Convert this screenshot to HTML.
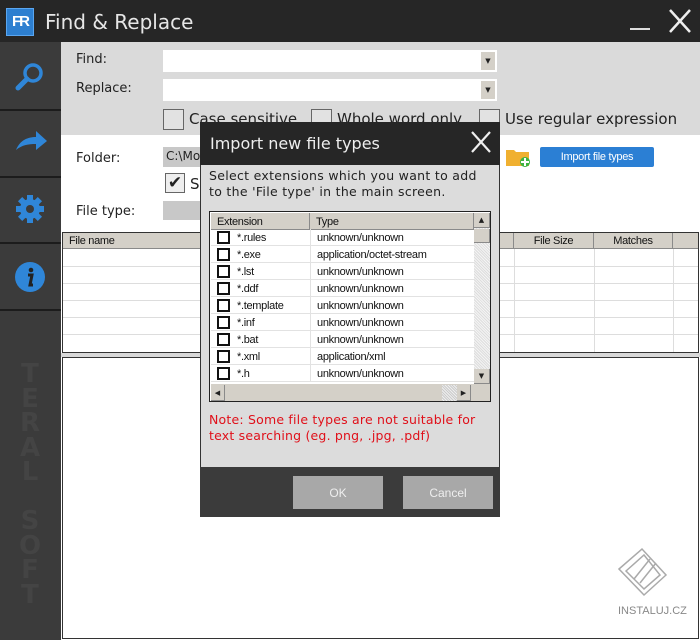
<!DOCTYPE html>
<html><head><meta charset="utf-8"><style>
*{margin:0;padding:0;box-sizing:border-box}
body{width:700px;height:640px;position:relative;overflow:hidden;background:#fff;font-family:"DejaVu Sans","Liberation Sans",sans-serif;font-size:13px;color:#222}
.a{position:absolute}
.n{font-family:"Liberation Sans",sans-serif;font-size:11px;letter-spacing:-0.3px;color:#111}
.cb{position:absolute;width:11px;height:11px;border:2px solid #111;background:#fff}
.hd{background:#d4d0c8;border-right:1px solid #8a8a8a;border-bottom:1px solid #8a8a8a}
</style></head><body>
<div class="a" style="left:0;top:0;width:700px;height:42px;background:#262626"></div>
<div class="a" style="left:6px;top:8px;width:28px;height:28px;background:#2d7fd0;border:1px solid #5aa6f0;color:#fff;font-family:'Liberation Sans';font-size:15px;font-weight:bold;text-align:center;line-height:26px;letter-spacing:-2px">FR</div>
<div class="a" style="left:45px;top:10px;color:#e6e6e6;font-size:20px">Find &amp; Replace</div>
<div class="a" style="left:630px;top:28px;width:20px;height:2px;background:#ddd"></div>
<svg class="a" style="left:668px;top:8px" width="24" height="26"><path d="M2 2L22 24M22 2L2 24" stroke="#eee" stroke-width="2.5"/></svg>
<div class="a" style="left:0;top:42px;width:61px;height:598px;background:#3b3b3b"></div>
<div class="a" style="left:0;top:109px;width:61px;height:2px;background:#1c1c1c"></div>
<div class="a" style="left:0;top:176px;width:61px;height:2px;background:#1c1c1c"></div>
<div class="a" style="left:0;top:242px;width:61px;height:2px;background:#1c1c1c"></div>
<div class="a" style="left:0;top:309px;width:61px;height:2px;background:#1c1c1c"></div>
<svg class="a" style="left:14px;top:60px" width="32" height="34"><circle cx="19" cy="13" r="8" fill="none" stroke="#2f86d8" stroke-width="3.5"/><path d="M13 19L4 28" stroke="#2f86d8" stroke-width="5" stroke-linecap="round"/></svg>
<svg class="a" style="left:14px;top:128px" width="34" height="26"><path d="M2 22C6 12 14 9 22 9V3L33 13L22 22V16C14 16 8 17 2 22Z" fill="#2f86d8"/></svg>
<svg class="a" style="left:15px;top:194px" width="30" height="30"><g fill="#2f86d8" transform="translate(15 15)"><circle r="10"/><rect x="-3" y="-14" width="6" height="28"/><rect x="-3" y="-14" width="6" height="28" transform="rotate(45)"/><rect x="-3" y="-14" width="6" height="28" transform="rotate(90)"/><rect x="-3" y="-14" width="6" height="28" transform="rotate(135)"/></g><circle cx="15" cy="15" r="4" fill="#3b3b3b"/></svg>
<svg class="a" style="left:14px;top:261px" width="32" height="32"><circle cx="16" cy="16" r="15" fill="#2f86d8"/><circle cx="17" cy="9" r="2.3" fill="#222"/><path d="M14 14H18L16 24H19" stroke="#222" stroke-width="3" fill="none"/></svg>
<div class="a" style="left:15px;top:362px;width:30px;color:#444;font-size:26px;font-weight:bold;line-height:24.5px;text-align:center">T<br>E<br>R<br>A<br>L<br><br>S<br>O<br>F<br>T</div>
<div class="a" style="left:61px;top:42px;width:639px;height:93px;background:#dadada"></div>
<div class="a" style="left:76px;top:52px">Find:</div>
<div class="a" style="left:76px;top:81px">Replace:</div>
<div class="a" style="left:163px;top:50px;width:334px;height:22px;background:#fff"></div>
<div class="a" style="left:481px;top:52px;width:14px;height:18px;background:#d4d0c8;font-size:7px;text-align:center;line-height:18px">▼</div>
<div class="a" style="left:163px;top:79px;width:334px;height:22px;background:#fff"></div>
<div class="a" style="left:481px;top:81px;width:14px;height:18px;background:#d4d0c8;font-size:7px;text-align:center;line-height:18px">▼</div>
<div class="a" style="left:163px;top:109px;width:21px;height:21px;border:1px solid #666;background:#e2e2e2"></div>
<div class="a" style="left:189px;top:110px;font-size:15px">Case sensitive</div>
<div class="a" style="left:311px;top:109px;width:21px;height:21px;border:1px solid #666;background:#e2e2e2"></div>
<div class="a" style="left:337px;top:110px;font-size:15px">Whole word only</div>
<div class="a" style="left:479px;top:109px;width:21px;height:21px;border:1px solid #666;background:#e2e2e2"></div>
<div class="a" style="left:505px;top:110px;font-size:15px">Use regular expression</div>
<div class="a" style="left:76px;top:151px">Folder:</div>
<div class="a" style="left:163px;top:147px;width:50px;height:20px;background:#c8c8c8;font-size:12px;padding:2px 3px">C:\Mo</div>
<div class="a" style="left:165px;top:173px;width:20px;height:20px;border:1px solid #666;background:#eee;font-size:17px;line-height:18px;text-align:center;font-weight:bold">✔</div>
<div class="a" style="left:190px;top:175px;font-size:15px">S</div>
<div class="a" style="left:76px;top:204px">File type:</div>
<div class="a" style="left:163px;top:201px;width:50px;height:19px;background:#c8c8c8"></div>
<svg class="a" style="left:505px;top:146px" width="26" height="22"><path d="M1 4H9L11 6H24V20H1Z" fill="#f0b030"/><circle cx="20" cy="16" r="5" fill="#3cb340"/><path d="M20 12V20M16 16H24" stroke="#fff" stroke-width="2"/></svg>
<div class="a" style="left:540px;top:147px;width:114px;height:20px;background:#2b7fd4;border-radius:2px;color:#fff;text-align:center;line-height:20px;font-family:'Liberation Sans';font-size:11px;letter-spacing:-0.3px">Import file types</div>
<div class="a" style="left:62px;top:232px;width:637px;height:121px;border:1px solid #333;background:#fff;overflow:hidden">
 <div class="a hd n" style="left:0;top:0;width:451px;height:16px;padding-left:6px;line-height:17px">File name</div>
 <div class="a hd n" style="left:451px;top:0;width:80px;height:16px;text-align:center;line-height:17px">File Size</div>
 <div class="a hd n" style="left:531px;top:0;width:79px;height:16px;text-align:center;line-height:17px">Matches</div>
 <div class="a hd" style="left:610px;top:0;width:27px;height:16px"></div>
 <div class="a" style="left:0;top:33px;width:637px;height:1px;background:#ddd"></div>
 <div class="a" style="left:0;top:50px;width:637px;height:1px;background:#ddd"></div>
 <div class="a" style="left:0;top:67px;width:637px;height:1px;background:#ddd"></div>
 <div class="a" style="left:0;top:84px;width:637px;height:1px;background:#ddd"></div>
 <div class="a" style="left:0;top:101px;width:637px;height:1px;background:#ddd"></div>
 <div class="a" style="left:451px;top:16px;width:1px;height:105px;background:#ddd"></div>
 <div class="a" style="left:531px;top:16px;width:1px;height:105px;background:#ddd"></div>
 <div class="a" style="left:610px;top:16px;width:1px;height:105px;background:#ddd"></div>
</div>
<div class="a" style="left:61px;top:353px;width:639px;height:4px;background:#d8d8d8"></div>
<div class="a" style="left:62px;top:357px;width:637px;height:282px;border:1px solid #333;background:#fff"></div>
<svg class="a" style="left:614px;top:545px" width="70" height="60"><g fill="none" stroke="#aaa" stroke-width="1.5"><path d="M5 24L28 4L52 30L30 50Z"/><path d="M12 26L30 10L46 30L30 44Z"/><path d="M20 34L36 14M26 38L42 18"/></g></svg>
<div class="a" style="left:618px;top:605px;font-family:'Liberation Sans';font-size:11px;color:#888">INSTALUJ.CZ</div>
<div class="a" style="left:200px;top:122px;width:300px;height:395px;background:#dcdcdc;border:1px solid #333"></div>
<div class="a" style="left:200px;top:122px;width:300px;height:43px;background:#262626"></div>
<div class="a" style="left:210px;top:134px;color:#eee;font-size:16px">Import new file types</div>
<svg class="a" style="left:470px;top:130px" width="22" height="24"><path d="M2 2L20 22M20 2L2 22" stroke="#eee" stroke-width="2.2"/></svg>
<div class="a" style="left:209px;top:168px;font-size:12.5px;line-height:16px;letter-spacing:0.3px;color:#222">Select extensions which you want to add<br>to the 'File type' in the main screen.</div>
<div class="a" style="left:209px;top:211px;width:282px;height:191px;border:1px solid #222;background:#fff;overflow:hidden">
 <div class="a hd n" style="left:1px;top:1px;width:99px;height:17px;padding-left:6px;line-height:18px">Extension</div>
 <div class="a hd n" style="left:100px;top:1px;width:164px;height:17px;padding-left:6px;line-height:18px">Type</div>
 <div class="a" style="left:264px;top:1px;width:16px;height:172px;background:repeating-linear-gradient(45deg,#ddd 0 1px,#f4f4f4 1px 2px)"></div>
 <div class="a hd" style="left:264px;top:1px;width:16px;height:15px;font-size:7px;text-align:center;line-height:15px">▲</div>
 <div class="a hd" style="left:264px;top:17px;width:16px;height:14px"></div>
 <div class="a hd" style="left:264px;top:157px;width:16px;height:15px;font-size:7px;text-align:center;line-height:15px">▼</div>
 <div class="a" style="left:1px;top:172px;width:279px;height:17px;background:#d4d0c8"></div>
 <div class="a hd" style="left:1px;top:173px;width:14px;height:16px;font-size:7px;text-align:center;line-height:16px">◀</div>
 <div class="a" style="left:232px;top:173px;width:15px;height:16px;background:repeating-linear-gradient(45deg,#ccc 0 1px,#eee 1px 2px)"></div>
 <div class="a hd" style="left:247px;top:173px;width:14px;height:16px;font-size:7px;text-align:center;line-height:16px">▶</div>
</div>
<div class="a" style="left:209px;top:412px;color:#e0101a;font-size:12.5px;line-height:16px;letter-spacing:0.2px">Note: Some file types are not suitable for<br>text searching (eg. png, .jpg, .pdf)</div>
<div class="a" style="left:200px;top:467px;width:300px;height:50px;background:#3b3b3b"></div>
<div class="a" style="left:293px;top:476px;width:90px;height:33px;background:#a8a8a8;color:#eee;text-align:center;line-height:35px;font-family:'Liberation Sans';font-size:12px">OK</div>
<div class="a" style="left:403px;top:476px;width:90px;height:33px;background:#a8a8a8;color:#eee;text-align:center;line-height:35px;font-family:'Liberation Sans';font-size:12px">Cancel</div>
<style>
.r{position:absolute;left:1px;width:263px;height:17px;border-bottom:1px solid #e2e2e2}
.r .cb{left:6px;top:2px;width:13px;height:13px}
.r .e{position:absolute;left:26px;top:3px}
.r .t{position:absolute;left:106px;top:3px}
.r .v{position:absolute;left:99px;top:0;width:1px;height:17px;background:#e2e2e2}
</style>
<div class="a" style="left:210px;top:229px">
<div class="r n" style="top:0"><div class="cb"></div><span class="e">*.rules</span><div class="v"></div><span class="t">unknown/unknown</span></div>
<div class="r n" style="top:17px"><div class="cb"></div><span class="e">*.exe</span><div class="v"></div><span class="t">application/octet-stream</span></div>
<div class="r n" style="top:34px"><div class="cb"></div><span class="e">*.lst</span><div class="v"></div><span class="t">unknown/unknown</span></div>
<div class="r n" style="top:51px"><div class="cb"></div><span class="e">*.ddf</span><div class="v"></div><span class="t">unknown/unknown</span></div>
<div class="r n" style="top:68px"><div class="cb"></div><span class="e">*.template</span><div class="v"></div><span class="t">unknown/unknown</span></div>
<div class="r n" style="top:85px"><div class="cb"></div><span class="e">*.inf</span><div class="v"></div><span class="t">unknown/unknown</span></div>
<div class="r n" style="top:102px"><div class="cb"></div><span class="e">*.bat</span><div class="v"></div><span class="t">unknown/unknown</span></div>
<div class="r n" style="top:119px"><div class="cb"></div><span class="e">*.xml</span><div class="v"></div><span class="t">application/xml</span></div>
<div class="r n" style="top:136px"><div class="cb"></div><span class="e">*.h</span><div class="v"></div><span class="t">unknown/unknown</span></div>
</div>
</body></html>
